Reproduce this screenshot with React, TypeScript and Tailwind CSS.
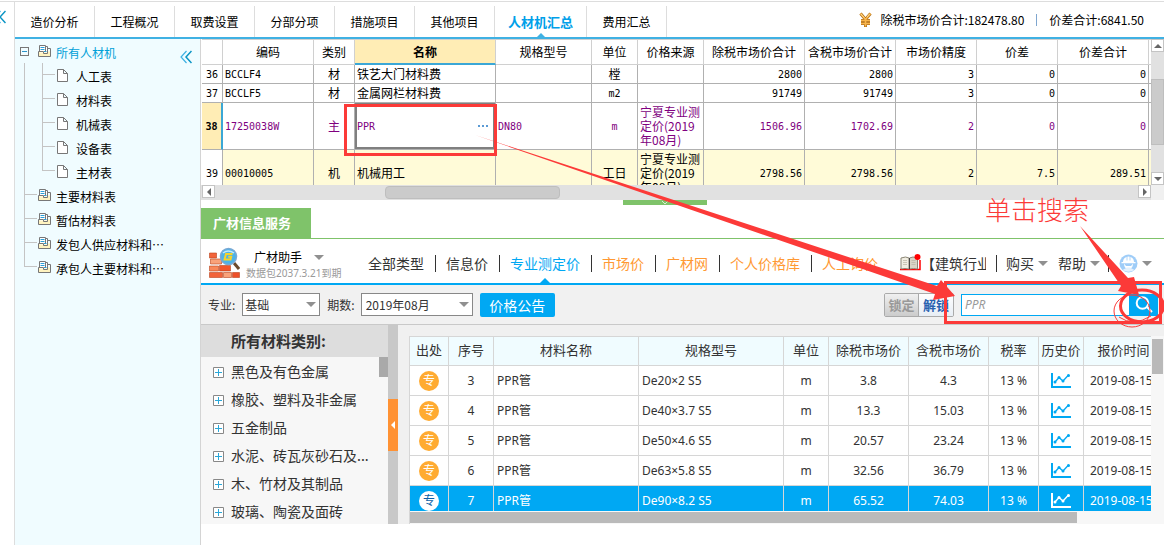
import { useState } from "react";
import clsx from "clsx";

const navTabs = ["造价分析", "工程概况", "取费设置", "分部分项", "措施项目", "其他项目", "人材机汇总", "费用汇总"];

const treeChildren = ["人工表", "材料表", "机械表", "设备表", "主材表"];
const treeRoots = ["主要材料表", "暂估材料表", "发包人供应材料和…", "承包人主要材料和…"];

const gridHeads = ["", "编码", "类别", "名称", "规格型号", "单位", "价格来源", "除税市场价合计", "含税市场价合计", "市场价精度", "价差", "价差合计"];

interface GridRow {
  no: number;
  code: string;
  kind: string;
  name: string;
  spec: string;
  unit: string;
  source: string;
  values: string[];
}

const gridRows: GridRow[] = [
  { no: 36, code: "BCCLF4", kind: "材", name: "铁艺大门材料费", spec: "", unit: "樘", source: "", values: ["2800", "2800", "3", "0", "0"] },
  { no: 37, code: "BCCLF5", kind: "材", name: "金属网栏材料费", spec: "", unit: "m2", source: "", values: ["91749", "91749", "3", "0", "0"] },
  { no: 38, code: "17250038W", kind: "主", name: "PPR", spec: "DN80", unit: "m", source: "宁夏专业测定价(2019年08月)", values: ["1506.96", "1702.69", "2", "0", "0"] },
  { no: 39, code: "00010005", kind: "机", name: "机械用工", spec: "", unit: "工日", source: "宁夏专业测定价(2019年08月)", values: ["2798.56", "2798.56", "2", "7.5", "289.51"] },
];

const priceTabs = [
  { label: "全部类型", color: "text-[#333]" },
  { label: "信息价", color: "text-[#333]" },
  { label: "专业测定价", color: "text-[#00a8f3]" },
  { label: "市场价", color: "text-[#ff9933]" },
  { label: "广材网", color: "text-[#ff9933]" },
  { label: "个人价格库", color: "text-[#ff9933]" },
  { label: "人工询价", color: "text-[#ff9933]" },
];

const categories = ["黑色及有色金属", "橡胶、塑料及非金属", "五金制品", "水泥、砖瓦灰砂石及...", "木、竹材及其制品", "玻璃、陶瓷及面砖"];

const priceHeads = ["出处", "序号", "材料名称", "规格型号", "单位", "除税市场价", "含税市场价", "税率", "历史价", "报价时间"];

const priceRows = [
  { no: 3, spec: "De20×2 S5", net: "3.8", gross: "4.3" },
  { no: 4, spec: "De40×3.7 S5", net: "13.3", gross: "15.03" },
  { no: 5, spec: "De50×4.6 S5", net: "20.57", gross: "23.24" },
  { no: 6, spec: "De63×5.8 S5", net: "32.56", gross: "36.79" },
  { no: 7, spec: "De90×8.2 S5", net: "65.52", gross: "74.03" },
];

export default function App() {
  return (
    <div className="relative flex min-h-screen overflow-hidden bg-white pt-px font-['Noto_Sans_CJK_SC',sans-serif] text-xs text-black">
      <div className="w-[14px] shrink-0 border-t border-[#ddd] pt-2">
        <DoubleChevron className="-ml-1.5" />
      </div>
      <div className="flex min-w-0 flex-1 flex-col border-l border-[#ddd]">
        <TopNav />
        <div className="flex flex-1">
          <TreePanel />
          <main className="min-w-0 flex-1">
            <MaterialGrid />
            <PriceService />
          </main>
        </div>
      </div>
      <Annotations />
    </div>
  );
}

function TopNav() {
  const [active, setActive] = useState("人材机汇总");

  return (
    <header className="flex h-[38px] items-stretch justify-between border-t border-b-2 border-t-[#ddd] border-b-[#3fb1e3]">
      <nav className="flex pt-1">
        {navTabs.map((tab) => (
          <button
            key={tab}
            onClick={() => setActive(tab)}
            className={clsx(
              "relative border-r border-[#ddd]",
              tab === active ? "w-[92px] text-[13px] font-bold text-[#00a0e9]" : "w-20"
            )}
          >
            {tab}
            {tab === active && (
              <svg className="absolute bottom-0 left-1/2 -translate-x-1/2" width="8" height="4" viewBox="0 0 8 4">
                <path d="M0 4 4 0l4 4z" fill="#3fb1e3" />
              </svg>
            )}
          </button>
        ))}
      </nav>
      <div className="flex items-center pr-5">
        <svg className="mr-2" width="13" height="16" viewBox="0 0 13 16">
          <path d="M1.500 1.500l5 6 5-6M6.500 7v8M2 8.500h9M2 11.500h9" fill="none" stroke="#b0701c" strokeWidth="3" />
          <path d="M1.500 1.500l5 6 5-6M6.500 7v7.500M2 8.500h9M2 11.500h9" fill="none" stroke="#f9b54c" strokeWidth="1.600" />
          <path d="M2 2l3 3.500M10.500 2L8 5" stroke="#ffe3a0" strokeWidth=".8" />
        </svg>
        <span>除税市场价合计:182478.80</span>
        <span className="mx-3 h-3 w-px bg-[#7fa6cf]" />
        <span>价差合计:6841.50</span>
      </div>
    </header>
  );
}

function TreePanel() {
  return (
    <aside className="w-[186px] shrink-0 border-r border-[#d4d4d4] bg-[#f0fcff]">
      <div className="flex h-6 items-center pr-2 pl-[5px]">
        <button aria-label="折叠" className="flex h-[9px] w-[9px] items-center justify-center border border-[#777]">
          <span className="h-px w-[5px] bg-[#2a93c9]" />
        </button>
        <BookIcon className="ml-[9px]" />
        <a href="#all" className="ml-[5px] pt-1 leading-5 text-[#00a0d8]">所有人材机</a>
        <DoubleChevron className="mt-3 ml-auto" />
      </div>
      <ul className="pl-[9px]">
        {treeChildren.map((name, i) => (
          <li key={name} className="flex h-6 items-center">
            <span className="h-6 w-[18px] border-l border-[#c4c4c4]" />
            <Guide last={i === treeChildren.length - 1} />
            <svg className="ml-px" width="11" height="13" viewBox="0 0 11 13">
              <path d="M.5.5h6l4 4v8H.5zM6.500.5v4h4" fill="#fff" stroke="#777" />
            </svg>
            <a href="#table" className="ml-2 pt-1 leading-5">{name}</a>
          </li>
        ))}
        {treeRoots.map((name, i) => (
          <li key={name} className="flex h-6 items-center">
            <Guide last={i === treeRoots.length - 1} />
            <BookIcon />
            <a href="#table" className="ml-[5px] pt-1 leading-5">{name}</a>
          </li>
        ))}
      </ul>
    </aside>
  );
}

// Branch line in front of a tree node
function Guide({ last }: { last: boolean }) {
  return (
    <span className="flex h-6 w-[14px] flex-col pr-px">
      <span className="h-3 border-b border-l border-[#c4c4c4]" />
      {!last && <span className="h-3 border-l border-[#c4c4c4]" />}
    </span>
  );
}

function MaterialGrid() {
  return (
    <section>
      <div className="flex h-[146px] pl-px">
        <div className="min-w-0 flex-1 overflow-hidden">
          <table className="w-full table-fixed border-separate border-spacing-0">
            <colgroup>
              <col className="w-[21px]" />
              <col className="w-[91px]" />
              <col className="w-[41px]" />
              <col className="w-[141px]" />
              <col className="w-[96px]" />
              <col className="w-[46px]" />
              <col className="w-[66px]" />
              <col className="w-[101px]" />
              <col className="w-[91px]" />
              <col className="w-[81px]" />
              <col className="w-[81px]" />
              <col className="w-[91px]" />
              <col />
            </colgroup>
            <thead>
              <tr>
                {gridHeads.map((head) => (
                  <th
                    key={head}
                    className={clsx(
                      "h-[26px] border-t border-r border-[#d0d0d0] p-0 whitespace-nowrap",
                      head === "名称" ? "border-b-2 border-b-[#3ba7d6] bg-[#ffedb5] font-bold" : "border-b font-normal"
                    )}
                  >
                    {head}
                  </th>
                ))}
                <th className="border-t border-b border-[#d0d0d0] p-0" />
              </tr>
            </thead>
            <tbody>
              {gridRows.map((row) => (
                <MaterialRow key={row.no} row={row} />
              ))}
            </tbody>
          </table>
        </div>
        <div className="flex w-[13px] flex-col justify-between bg-[#e1e1e1]">
          <ScrollButton dir="up" />
          <div className="mt-[27px] mb-auto h-[66px] border border-[#bebebe] bg-[#cbcbcb]" />
          <ScrollButton dir="down" />
        </div>
      </div>
      <div className="flex h-[15px] bg-[#e1e1e1] pl-px">
        <ScrollButton dir="left" />
        <div className="my-px mr-auto ml-[170px] w-[175px] rounded-sm border border-[#bebebe] bg-[#cbcbcb]" />
        <ScrollButton dir="right" />
        <div className="w-[13px] bg-[#f0f0f0]" />
      </div>
    </section>
  );
}

function MaterialRow({ row }: { row: GridRow }) {
  const selected = row.no === 38;
  const tall = row.source !== "";
  const cell = clsx(
    "border-r border-b border-[#b0b0b0] p-0 leading-[14px]",
    tall ? "h-[47px]" : "h-[19px]",
    selected && "text-[#800080]",
    row.no === 39 && "bg-[#fffbd8]"
  );
  const mono = "font-['DejaVu_Sans_Mono',monospace] text-[10px]";

  return (
    <tr>
      <td
        className={clsx(
          "border-b border-[#b0b0b0] p-0 pt-0.5 text-center leading-[14px]",
          mono,
          selected ? "border-r-2 border-r-[#3ba7d6] bg-[#ffedb5] font-bold" : "border-r"
        )}
      >
        {row.no}
      </td>
      <td className={clsx(cell, mono, "pt-0.5 pl-0.5")}>{row.code}</td>
      <td className={clsx(cell, "text-center")}>{row.kind}</td>
      {selected ? (
        <td className={clsx(cell, mono)}>
          <div className="flex h-[46px] items-center justify-between border-2 border-[#808080] pr-[5px]">
            <span className="pt-0.5">{row.name}</span>
            <button aria-label="更多" className="flex gap-0.5">
              <span className="size-0.5 bg-[#5b9bd5]" />
              <span className="size-0.5 bg-[#5b9bd5]" />
              <span className="size-0.5 bg-[#5b9bd5]" />
            </button>
          </div>
        </td>
      ) : (
        <td className={clsx(cell, "pl-0.5")}>{row.name}</td>
      )}
      <td className={clsx(cell, mono, "pt-0.5 pl-0.5")}>{row.spec}</td>
      <td className={clsx(cell, "text-center", /^m/.test(row.unit) && [mono, "pt-0.5"])}>{row.unit}</td>
      <td className={clsx(cell, "pl-0.5 break-all")}>{row.source}</td>
      {row.values.map((value, i) => (
        <td key={i} className={clsx(cell, mono, "pt-0.5 pr-0.5 text-right")}>{value}</td>
      ))}
      <td className={clsx("border-b border-[#b0b0b0] p-0", row.no === 39 && "bg-[#fffbd8]")} />
    </tr>
  );
}

function PriceService() {
  return (
    <section className="text-[#333]">
      <div className="flex h-[39px] flex-col border-b border-[#7fc36a]">
        <div className="ml-[422px] flex h-[5px] w-[84px] justify-center bg-[#7fc36a]">
          <svg width="8" height="5" viewBox="0 0 8 5">
            <path d="M1 1l3 3 3-3" fill="none" stroke="#d8efd0" />
          </svg>
        </div>
        <h2 className="mt-auto flex h-[30px] w-[110px] items-center bg-[#7fc36a] pl-3 text-[13px] font-bold text-white">广材信息服务</h2>
      </div>
      <ServiceHeader />
      <FilterBar />
      <div className="flex h-[199px]">
        <CategoryPanel />
        <PriceTable />
      </div>
    </section>
  );
}

function ServiceHeader() {
  return (
    <div className="flex h-[46px] items-center border-b-2 border-[#00a8f3] pl-2">
      <BrickLogo />
      <div className="mt-2 ml-1.5 w-[98px] shrink-0 whitespace-nowrap">
        <button className="flex items-center pl-2 leading-4 text-black">
          广材助手
          <Caret className="ml-3" />
        </button>
        <p className="font-['Noto_Sans','Noto_Sans_CJK_SC',sans-serif] text-[10px] leading-4 text-[#999]">数据包2037.3.21到期</p>
      </div>
      <nav className="ml-[14px] flex self-stretch text-sm">
        {priceTabs.map((tab, i) => (
          <a key={tab.label} href="#price" className={clsx("relative flex items-center pt-1 whitespace-nowrap", tab.color)}>
            <span className={clsx("flex h-[17px] items-center pr-[11px] pl-2.5", i > 0 && "border-l border-[#333]")}>{tab.label}</span>
            {i === 2 && (
              <svg className="absolute bottom-0 left-1/2 -translate-x-1/2" width="10" height="5" viewBox="0 0 10 5">
                <path d="M0 5l5-5 5 5z" fill="#00a8f3" />
              </svg>
            )}
          </a>
        ))}
      </nav>
      <svg className="mt-1 ml-[11px] shrink-0" width="21" height="18" viewBox="0 0 21 18">
        <path d="M0 15.500h20V6" fill="none" stroke="#f00" strokeWidth="1.500" />
        <path d="M1 4q5-2 8 0v11q-4-1-8 0z" fill="#f1eee2" stroke="#8b8676" />
        <path d="M17.500 4q-5-2-8 0v11q4-1 8 0z" fill="#d9d5c6" stroke="#8b8676" />
        <path d="M3 6.500h4M3 8.500h4M3 10.500h4M11.500 6.500h4M11.500 8.500h4M11.500 10.500h4" stroke="#b9b4a4" strokeWidth=".7" />
        <path d="M9.500 4v11" stroke="#444" />
        <circle cx="17.500" cy="3" r="3" fill="#f00" />
      </svg>
      <a href="#news" className="mt-1 w-[65px] shrink-0 overflow-hidden text-sm whitespace-nowrap">【建筑行业</a>
      <div className="mt-1 ml-[10px] flex items-center text-sm whitespace-nowrap">
        <button className="flex h-[17px] items-center border-l border-[#333] pl-[9px]">
          购买
          <Caret className="ml-1" />
        </button>
        <button className="ml-2.5 flex h-[17px] items-center">
          帮助
          <Caret className="ml-1" />
        </button>
        <button aria-label="账户" className="ml-2 flex h-[17px] items-center border-l border-[#333] pl-2.5">
          <svg width="19" height="19" viewBox="0 0 19 19">
            <circle cx="9.500" cy="9.500" r="9" fill="#9fcdf8" />
            <path d="M4 8a5.500 5.500 0 0 1 11 0zM2.500 8h14v1.200h-14z" fill="#fff" />
            <path d="M8 2.500v4M11 2.500v4" stroke="#9fcdf8" strokeWidth=".8" />
            <path d="M5 9.500q0 4 3 5.500h3q3-1.500 3-5.500l-2 2.500H7z" fill="#fff" />
            <path d="M3.500 16l4.500-2.500h3l4.500 2.500q-6 3.500-12 0z" fill="#e4f1fd" />
          </svg>
          <Caret className="ml-1" />
        </button>
      </div>
    </div>
  );
}

function FilterBar() {
  const [keyword, setKeyword] = useState("");

  return (
    <form className="flex h-10 items-center border-b border-[#c9c9c9] bg-[#f1f1f1] pl-[7px]" onSubmit={(e) => e.preventDefault()}>
      <label htmlFor="major">专业:</label>
      <div className="relative ml-[7px]">
        <select id="major" className="h-[23px] w-[78px] appearance-none border border-[#888] bg-white px-0.5">
          <option>基础</option>
        </select>
        <Caret className="pointer-events-none absolute top-[9px] right-1" />
      </div>
      <label htmlFor="period" className="ml-[7px]">期数:</label>
      <div className="relative ml-1.5">
        <select id="period" className="h-[23px] w-[112px] appearance-none border border-[#888] bg-white px-1">
          <option>2019年08月</option>
        </select>
        <Caret className="pointer-events-none absolute top-[9px] right-1" />
      </div>
      <button type="button" className="ml-[7px] h-6 w-[75px] rounded-xs bg-[#00a8f3] text-sm leading-6 text-white">价格公告</button>
      <div className="ml-auto flex h-6 overflow-hidden rounded-xs border border-[#aaa] text-[13px] font-bold">
        <button type="button" className="w-[34px] border-r border-[#aaa] bg-linear-to-b from-[#f0f0f0] to-[#ccc] text-[#999]">锁定</button>
        <button type="button" className="w-[34px] bg-linear-to-b from-white to-[#e8eef5] text-[#2a62b0]">解锁</button>
      </div>
      <div className="mr-1.5 ml-[7px] flex">
        <input
          aria-label="搜索"
          placeholder="PPR"
          value={keyword}
          onChange={(e) => setKeyword(e.target.value)}
          className="h-[22px] w-[169px] border border-[#00a8f3] bg-white px-[3px] font-['Noto_Sans',sans-serif] italic placeholder:text-[#999]"
        />
        <button aria-label="搜索" className="flex h-[22px] w-7 items-center justify-center bg-[#00a8f3]">
          <svg width="18" height="17" viewBox="0 0 18 17">
            <circle cx="7.500" cy="7" r="5.800" fill="none" stroke="#fff" strokeWidth="2" />
            <path d="M12 11l5 5" stroke="#fff" strokeWidth="2" />
          </svg>
        </button>
      </div>
    </form>
  );
}

function CategoryPanel() {
  return (
    <>
      <div className="flex w-[187px] shrink-0 flex-col overflow-hidden bg-[#f7f7f7]">
        <h3 className="h-8 shrink-0 bg-[#ddd] pl-[30px] text-[15px] leading-8 font-bold">所有材料类别:</h3>
        <div className="flex items-start justify-between">
          <ul className="pl-3 text-sm">
            {categories.map((name) => (
              <li key={name} className="flex h-7 items-center whitespace-nowrap">
                <button aria-label={name} className="mt-0.5 mr-[7px]">
                  <svg width="11" height="11" viewBox="0 0 11 11">
                    <path d="M.5.5h10v10H.5z" fill="#fff" stroke="#888" />
                    <path d="M2 5.500h7M5.500 2v7" stroke="#2aa7d8" />
                  </svg>
                </button>
                {name}
              </li>
            ))}
          </ul>
          <div className="h-5 w-[9px] bg-[#a9a9a9]" />
        </div>
      </div>
      <div className="w-2.5 shrink-0 bg-[#c8c8c8] pt-[74px]">
        <button aria-label="收起" className="flex h-[52px] w-2.5 items-center justify-center bg-[#ff9234]">
          <svg width="4" height="8" viewBox="0 0 4 8">
            <path d="M4 0v8L0 4z" fill="#fff" />
          </svg>
        </button>
      </div>
    </>
  );
}

function PriceTable() {
  return (
    <div className="flex min-w-0 flex-1 bg-[#f0f0f0] pt-[11px] pl-[11px]">
      <div className="flex min-w-0 flex-1 flex-col border-l border-[#d6d6d6]">
        <div className="h-[175px] overflow-hidden bg-white font-['Noto_Sans','Noto_Sans_CJK_SC',sans-serif]">
          <table className="w-[754px] table-fixed border-separate border-spacing-0">
            <colgroup>
              <col className="w-[39px]" />
              <col className="w-[45px]" />
              <col className="w-[145px]" />
              <col className="w-[145px]" />
              <col className="w-[45px]" />
              <col className="w-20" />
              <col className="w-20" />
              <col className="w-[50px]" />
              <col className="w-[45px]" />
              <col className="w-20" />
            </colgroup>
            <thead>
              <tr>
                {priceHeads.map((head) => (
                  <th key={head} className="h-[30px] border-t border-r border-b border-[#d6d6d6] bg-[#f0fcff] p-0 text-[13px] font-normal whitespace-nowrap">
                    {head}
                  </th>
                ))}
              </tr>
            </thead>
            <tbody>
              {priceRows.map((row) => {
                const selected = row.no === 7;
                const cell = clsx("h-[30px] border-r border-b border-[#d6d6d6] p-0", selected && "bg-[#00a8f3] text-white");
                return (
                  <tr key={row.no} className="text-center">
                    <td className={cell}>
                      <span
                        className={clsx(
                          "mx-auto flex size-5 items-center justify-center rounded-full leading-5",
                          selected ? "bg-white text-[#0a5fa8]" : "bg-[#ffab32] text-white"
                        )}
                      >
                        专
                      </span>
                    </td>
                    <td className={cell}>{row.no}</td>
                    <td className={clsx(cell, "pl-[3px] text-left")}>PPR管</td>
                    <td className={clsx(cell, "pl-[3px] text-left")}>{row.spec}</td>
                    <td className={cell}>m</td>
                    <td className={cell}>{row.net}</td>
                    <td className={cell}>{row.gross}</td>
                    <td className={cell}>13 %</td>
                    <td className={cell}>
                      <TrendIcon color={selected ? "#fff" : "#00a8f3"} />
                    </td>
                    <td className={clsx(cell, "pl-1.5 text-left")}>2019-08-15</td>
                  </tr>
                );
              })}
            </tbody>
          </table>
        </div>
        <div className="flex h-[13px] bg-[#f7f7f7] pt-px">
          <div className="h-[11px] w-[90%] bg-[#bababa]" />
        </div>
      </div>
      <div className="w-[13px] bg-[#f7f7f7] px-px pt-[3px]">
        <div className="h-[35px] bg-[#b9b9b9]" />
      </div>
    </div>
  );
}

function TrendIcon({ color }: { color: string }) {
  return (
    <svg className="mx-auto" width="20" height="15" viewBox="0 0 20 15">
      <path d="M1 0v14h19" fill="none" stroke={color} strokeWidth="2" />
      <path d="M4 9l4-4.500L12 8l5.500-6" fill="none" stroke={color} strokeWidth="1.300" />
      <g fill={color}>
        <circle cx="4" cy="9" r="1.500" />
        <circle cx="8" cy="4.500" r="1.500" />
        <circle cx="12" cy="8" r="1.500" />
        <circle cx="17.500" cy="2.500" r="1.500" />
      </g>
    </svg>
  );
}

function Caret({ className }: { className?: string }) {
  return (
    <svg className={clsx("shrink-0", className)} width="10" height="5" viewBox="0 0 10 5">
      <path d="M0 0h10L5 5z" fill="#909090" />
    </svg>
  );
}

function DoubleChevron({ className }: { className?: string }) {
  return (
    <svg className={clsx("shrink-0", className)} width="12" height="14" viewBox="0 0 12 14">
      <path d="M6.500 1L1 7l5.500 6" fill="none" stroke="#3fb1e3" strokeWidth="1.200" />
      <path d="M11.500 1L6 7l5.500 6" fill="none" stroke="#0a94c4" strokeWidth="1.500" />
    </svg>
  );
}

function BookIcon({ className }: { className?: string }) {
  return (
    <svg className={clsx("shrink-0", className)} width="13" height="12" viewBox="0 0 13 12">
      <path d="M.5 6.500h12v5H.5z" fill="#fff3c0" />
      <path d="M1.500.5h6l2 2v5h-8z" fill="#fff" />
      <path d="M1.500 7V.5h6v6M8 1.500h1.500v7h-4M10 3.500h2.500v8H.5v-5h5v2" fill="none" stroke="#777" />
      <path d="M2.500 2.500h4M2.500 4.500h4M6 6.500h2.500" stroke="#2a9fd8" />
    </svg>
  );
}

function ScrollButton({ dir }: { dir: "up" | "down" | "left" | "right" }) {
  const arrows = { up: "M0 6l4-4 4 4z", down: "M0 2h8L4 6z", left: "M6 0v8L2 4z", right: "M2 0l4 4-4 4z" };
  return (
    <button aria-label={dir} className="flex h-[13px] w-[13px] shrink-0 items-center justify-center border border-[#c4c4c4] bg-white">
      <svg width="8" height="8" viewBox="0 0 8 8">
        <path d={arrows[dir]} fill="#666" />
      </svg>
    </button>
  );
}

// Brick wall with a magnifier over its corner
function BrickLogo() {
  return (
    <svg className="mt-1 shrink-0" width="31" height="32" viewBox="0 0 31 32">
      <g stroke="#b8431c" strokeWidth=".6">
        <path d="M.5 6h7v5h-7z" fill="#f2633a" />
        <path d="M1.500 12h11v5h-11z" fill="#f9a27a" />
        <path d="M.5 19h9v5h-9z" fill="#f9885a" />
        <path d="M10.500 18.500h11v5.500h-11z" fill="#f2552c" />
        <path d="M.5 25.500h13v5h-13z" fill="#f2633a" />
        <path d="M14.500 25.500h8v5h-8z" fill="#f9a27a" />
        <path d="M23.500 25.500h7v5h-7z" fill="#ee4f28" />
      </g>
      <path d="M25 16l5 6" stroke="#6a4a2c" strokeWidth="3" />
      <circle cx="19.500" cy="9.500" r="8" fill="#4bb4ea" stroke="#7aa9d4" strokeWidth="1.500" />
      <path d="M14 6q5-4 11 0" fill="none" stroke="#c4e9fb" strokeWidth="1.500" />
      <path d="M23.500 7H17l-1.500 5.500h6l.7-2.800h-3" fill="none" stroke="#f6d32b" strokeWidth="2" />
    </svg>
  );
}

// Red guide marks drawn over the screen
function Annotations() {
  return (
    <>
      <svg className="pointer-events-none absolute top-0 left-0" width="1164" height="545" viewBox="0 0 1164 545">
        <g fill="none" stroke="#fc3a38">
          <path d="M345.500 105.500h150v49h-150z" strokeWidth="3" />
          <path d="M945.500 282.500h215v40h-215z" strokeWidth="3" />
          <ellipse cx="1142" cy="306" rx="21.500" ry="16" strokeWidth="3" />
          <ellipse cx="1132" cy="311" rx="18" ry="16" strokeWidth="1" />
          <path d="M1119 317q14 10 32-1" strokeWidth="1" />
        </g>
        <g fill="#fc3a38">
          <path d="M475 135L937 286 941 280 955 296 933 300 935 294z" />
          <path d="M1080 226L1128 278 1134 277 1139 295 1118 291 1121 286z" />
        </g>
      </svg>
      <span className="pointer-events-none absolute top-[191px] right-[75px] text-[26px] leading-9 font-light text-[#fc3a38]">单击搜索</span>
    </>
  );
}
